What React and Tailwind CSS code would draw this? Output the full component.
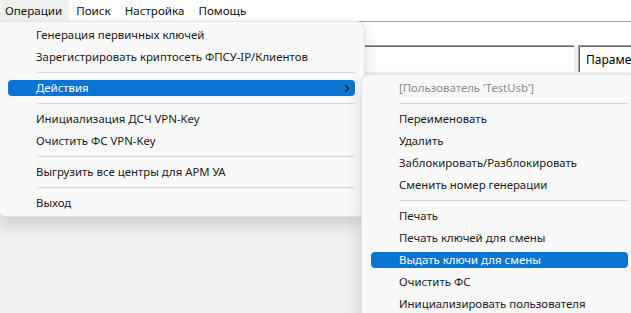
import React from "react";

const FONT = "font-['Segoe_UI','Noto_Sans','Liberation_Sans',sans-serif]";

function Item({ children, active, disabled, arrow }) {
  return (
    <div className="h-[22px] flex items-center px-[9px]">
      <div
        className={
          "h-[16px] w-full rounded-[4px] flex items-center pl-[28px] pr-[6px] " +
          (active ? "bg-[#0a74d2] text-white" : disabled ? "text-[#8b8b8b]" : "text-[#1a1a1a]")
        }
      >
        <span className="flex-1 whitespace-nowrap leading-none mt-[-1px]">{children}</span>
        {arrow && (
          <svg width="6" height="9" viewBox="0 0 6 9" className="mr-[-1px]">
            <path d="M1 1 L4.5 4.5 L1 8" fill="none" stroke="#1a1a1a" strokeWidth="1.2" />
          </svg>
        )}
      </div>
    </div>
  );
}

function Sep() {
  return (
    <div className="h-[9px] flex items-center pl-[38px] pr-[9px]">
      <div className="h-px w-full bg-[#d6d6d6]" />
    </div>
  );
}

export default function App() {
  return (
    <div className={"relative w-[631px] h-[313px] overflow-hidden bg-[#f0f0f0] text-[11.4px] " + FONT}>
      {/* menu bar */}
      <div className="h-[21px] bg-white flex items-center ml-[-2px] text-[#111111] text-[11.6px]">
        <div className="h-full flex items-center px-[7px] bg-[#f0f0f0]">Операции</div>
        <div className="h-full flex items-center px-[7px]">Поиск</div>
        <div className="h-full flex items-center px-[7px]">Настройка</div>
        <div className="h-full flex items-center px-[7px]">Помощь</div>
      </div>
      {/* background window */}
      <div className="h-[24px] bg-white border-t border-[#a0a0a0]" />
      <div className="h-[27px] flex bg-[#f0f0f0]">
        <div className="w-[574px] shrink-0 bg-white border-t border-l border-[#a0a0a0]">
          <div className="h-full border-t border-l border-[#696969]" />
        </div>
        <div className="w-[4px] shrink-0" />
        <div className="w-[120px] shrink-0 bg-white border-t border-l border-[#a0a0a0]">
          <div className="h-full border-t border-l border-[#696969] pl-[6px] pt-[4px] text-black whitespace-nowrap text-[12px]">
            Параметры
          </div>
        </div>
      </div>

      {/* first dropdown */}
      <div className="absolute left-[-2px] top-[21px] w-[367px] py-[2px] bg-[#f9f9f9] border border-[#e3e3e3] rounded-[8px] rounded-tl-none shadow-[0_8px_16px_rgba(0,0,0,0.14)]">
        <Item>Генерация первичных ключей</Item>
        <Item>Зарегистрировать криптосеть ФПСУ-IP/Клиентов</Item>
        <Sep />
        <Item active arrow>Действия</Item>
        <Sep />
        <Item>Инициализация ДСЧ VPN-Key</Item>
        <Item>Очистить ФС VPN-Key</Item>
        <Sep />
        <Item>Выгрузить все центры для АРМ УА</Item>
        <Sep />
        <Item>Выход</Item>
      </div>

      {/* submenu */}
      <div className="absolute left-[361px] top-[74px] w-[277px] h-[260px] py-[2px] bg-[#f9f9f9] border border-[#e3e3e3] rounded-[8px] shadow-[0_8px_16px_rgba(0,0,0,0.14)]">
        <Item disabled>[Пользователь 'TestUsb']</Item>
        <Sep />
        <Item>Переименовать</Item>
        <Item>Удалить</Item>
        <Item>Заблокировать/Разблокировать</Item>
        <Item>Сменить номер генерации</Item>
        <Sep />
        <Item>Печать</Item>
        <Item>Печать ключей для смены</Item>
        <Item active>Выдать ключи для смены</Item>
        <Item>Очистить ФС</Item>
        <Item>Инициализировать пользователя</Item>
      </div>
    </div>
  );
}
